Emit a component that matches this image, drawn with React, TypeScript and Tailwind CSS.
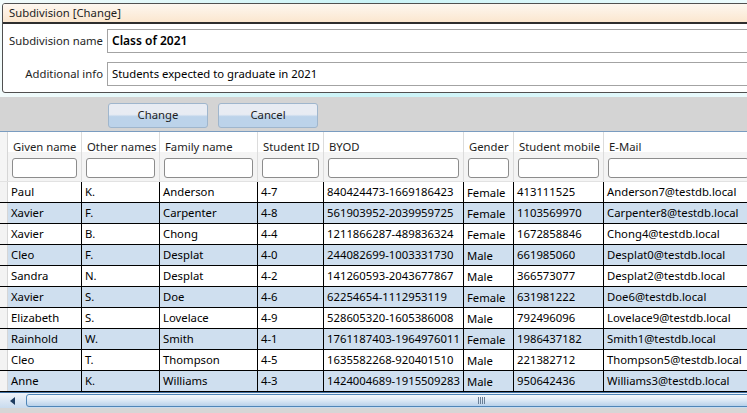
import React from 'react'

type Student = {
  given: string
  other: string
  family: string
  id: string
  byod: string
  gender: string
  mobile: string
  email: string
}

const students: Student[] = [
  { given: 'Paul', other: 'K.', family: 'Anderson', id: '4-7', byod: '840424473-1669186423', gender: 'Female', mobile: '413111525', email: 'Anderson7@testdb.local' },
  { given: 'Xavier', other: 'F.', family: 'Carpenter', id: '4-8', byod: '561903952-2039959725', gender: 'Female', mobile: '1103569970', email: 'Carpenter8@testdb.local' },
  { given: 'Xavier', other: 'B.', family: 'Chong', id: '4-4', byod: '1211866287-489836324', gender: 'Female', mobile: '1672858846', email: 'Chong4@testdb.local' },
  { given: 'Cleo', other: 'F.', family: 'Desplat', id: '4-0', byod: '244082699-1003331730', gender: 'Male', mobile: '661985060', email: 'Desplat0@testdb.local' },
  { given: 'Sandra', other: 'N.', family: 'Desplat', id: '4-2', byod: '141260593-2043677867', gender: 'Male', mobile: '366573077', email: 'Desplat2@testdb.local' },
  { given: 'Xavier', other: 'S.', family: 'Doe', id: '4-6', byod: '62254654-1112953119', gender: 'Female', mobile: '631981222', email: 'Doe6@testdb.local' },
  { given: 'Elizabeth', other: 'S.', family: 'Lovelace', id: '4-9', byod: '528605320-1605386008', gender: 'Male', mobile: '792496096', email: 'Lovelace9@testdb.local' },
  { given: 'Rainhold', other: 'W.', family: 'Smith', id: '4-1', byod: '1761187403-1964976011', gender: 'Female', mobile: '1986437182', email: 'Smith1@testdb.local' },
  { given: 'Cleo', other: 'T.', family: 'Thompson', id: '4-5', byod: '1635582268-920401510', gender: 'Male', mobile: '221382712', email: 'Thompson5@testdb.local' },
  { given: 'Anne', other: 'K.', family: 'Williams', id: '4-3', byod: '1424004689-1915509283', gender: 'Male', mobile: '950642436', email: 'Williams3@testdb.local' },
]

const columns: { key: keyof Student; label: string; w: string }[] = [
  { key: 'given', label: 'Given name', w: 'w-[74px]' },
  { key: 'other', label: 'Other names', w: 'w-[78px]' },
  { key: 'family', label: 'Family name', w: 'w-[98px]' },
  { key: 'id', label: 'Student ID', w: 'w-[66px]' },
  { key: 'byod', label: 'BYOD', w: 'w-[140px]' },
  { key: 'gender', label: 'Gender', w: 'w-[50px]' },
  { key: 'mobile', label: 'Student mobile', w: 'w-[90px]' },
  { key: 'email', label: 'E-Mail', w: 'w-[150px]' },
]

function Field({ label, value, bold }: { label: string; value: string; bold?: boolean }) {
  return (
    <div className="flex items-center h-[24px]">
      <div className="w-[104px] pr-[4px] text-right text-[11.3px] text-[#1e1e1e]">{label}</div>
      <div className="flex-1 h-[24px] border border-[#a3a3a3] bg-white flex items-center px-[4px]">
        <span className={bold ? 'text-[12px] font-semibold text-black' : 'text-[11.3px] text-black'}>{value}</span>
      </div>
    </div>
  )
}

function Button({ children }: { children: React.ReactNode }) {
  return (
    <button className="w-[100px] h-[25px] rounded-[3px] border border-[#9fb6cd] bg-gradient-to-b from-[#e8ecf3] from-45% to-[#bcd3ea] to-55% text-[11.3px] text-[#1e1e1e]">
      {children}
    </button>
  )
}

export default function App() {
  return (
    <div className="w-[747px] h-[413px] overflow-hidden bg-[#d4d4d4] flex flex-col" style={{ fontFamily: '"Segoe UI", "Noto Sans", sans-serif' }}>
      {/* edit panel */}
      <div className="bg-gradient-to-r from-[#f2fbfb] via-[#c9f3f7] to-[#ecfbfd] pt-[3px] pl-[2px] pb-[4px]">
        <div className="w-[770px] rounded-[3px] border border-[#505050] bg-white overflow-hidden">
          <div className="h-[20px] flex items-center px-[6px] bg-gradient-to-b from-[#fdf7f0] to-[#fbe7cf] border-b-2 border-[#2e2e2e] text-[11.3px] text-[#1e1e1e]">
            Subdivision [Change]
          </div>
          <div className="flex flex-col gap-[9px] pt-[5px] pb-[6px]">
            <Field label="Subdivision name" value="Class of 2021" bold />
            <Field label="Additional info" value="Students expected to graduate in 2021" />
          </div>
        </div>
      </div>

      {/* buttons */}
      <div className="h-[34px] flex items-start gap-[10px] pl-[108px] pt-[6px]">
        <Button>Change</Button>
        <Button>Cancel</Button>
      </div>

      {/* grid */}
      <div className="flex-1 flex flex-col border-t border-[#7a9cc0] bg-white">
        <div className="flex h-[50px] bg-gradient-to-b from-white from-40% to-[#f4f4f4] to-40% border-b border-[#e2e2e2]">
          <div className="w-[8px] shrink-0 border-r border-[#d6d6d6] bg-[#f5f5f5]" />
          {columns.map((c) => (
            <div key={c.key} className={`${c.w} shrink-0 border-r border-[#dcdcdc] flex flex-col px-[4px]`}>
              <div className="h-[26px] flex items-center text-[11.3px] text-[#1e1e1e] whitespace-nowrap pl-[1px] pt-[4px]">{c.label}</div>
              <div className="h-[20px] rounded-[3px] border border-[#8c8c8c] bg-white" />
            </div>
          ))}
        </div>
        {students.map((s, i) => (
          <div key={i} className={`flex h-[21px] border-b border-black ${i % 2 === 1 ? 'bg-[#cfdfef]' : 'bg-white'}`}>
            <div className="w-[8px] shrink-0 border-r border-[#d6d6d6] bg-[#f3f3f3]" />
            {columns.map((c) => (
              <div
                key={c.key}
                className={`${c.w} shrink-0 border-r border-black px-[3px] text-[11.3px] text-black whitespace-nowrap overflow-hidden flex ${c.key === 'gender' ? 'items-end' : 'items-center'}`}
              >
                {s[c.key]}
              </div>
            ))}
          </div>
        ))}

        {/* horizontal scrollbar */}
        <div className="h-[16px] flex items-stretch border-t border-[#3f6f9f] bg-gradient-to-b from-[#eef3f9] to-[#c9dbee]">
          <div className="w-[26px] flex items-center justify-center">
            <svg width="6" height="8" viewBox="0 0 6 8"><path d="M5 0 L0 4 L5 8 Z" fill="#1e3c60" /></svg>
          </div>
          <div className="flex-1 my-[1px] -mr-[6px] rounded-l-[3px] border border-[#4f86b8] bg-gradient-to-b from-[#f5f9fd] via-[#dbe8f5] to-[#b8d1ea] flex items-center pl-[451px]">
            <div className="flex gap-[1px]">
              <div className="w-[1px] h-[7px] bg-[#6a7f96]" />
              <div className="w-[1px] h-[7px] bg-[#6a7f96]" />
              <div className="w-[1px] h-[7px] bg-[#6a7f96]" />
              <div className="w-[1px] h-[7px] bg-[#6a7f96]" />
            </div>
          </div>
        </div>
        <div className="flex-1 bg-[#d6d6d6]" />
      </div>
    </div>
  )
}
